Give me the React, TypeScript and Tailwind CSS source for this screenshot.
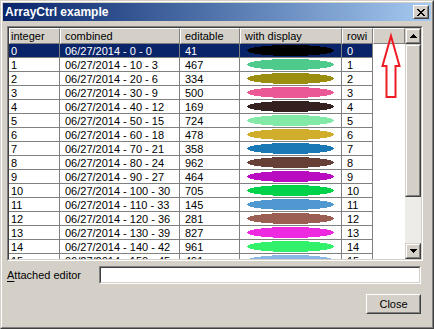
import React from "react";

const colors = [
  "#000000", "#4ecb8c", "#9b8d0e", "#ea5896", "#33201f", "#82eaa6", "#d1ad2c", "#1a78b4",
  "#663f36", "#b90bbf", "#00d24a", "#5098d0", "#9b5e52", "#ee2ae0", "#31f06a", "#8ab6e6",
];
const editable = [41, 467, 334, 500, 169, 724, 478, 358, 962, 464, 705, 145, 281, 827, 961, 491];

const raised =
  "border-t border-l border-t-white border-l-white border-r border-b border-r-[#808080] border-b-[#808080]";

function ScrollBtn({ down }: { down?: boolean }) {
  return (
    <div className="w-[16px] h-[16px] border border-t-[#d4d0c8] border-l-[#d4d0c8] border-r-[#404040] border-b-[#404040] bg-[#d4d0c8] shrink-0">
      <div className="w-full h-full border border-t-white border-l-white border-r-[#808080] border-b-[#808080] flex items-center justify-center">
        <svg width="7" height="4" viewBox="0 0 7 4" shapeRendering="crispEdges">
          {down ? (
            <polygon points="0,0 7,0 3.5,4" fill="#000" />
          ) : (
            <polygon points="3.5,0 7,4 0,4" fill="#000" />
          )}
        </svg>
      </div>
    </div>
  );
}

export default function App() {
  const font = "font-['Liberation_Sans',Arial,sans-serif]";
  return (
    <div className={`w-[434px] h-[329px] ${font} text-[11px] text-black`}>
      <div className="w-full h-full border border-t-[#d4d0c8] border-l-[#d4d0c8] border-r-[#404040] border-b-[#404040] bg-[#d4d0c8]">
        <div className="w-full h-full border border-t-white border-l-white border-r-[#808080] border-b-[#808080] p-px flex flex-col">
          {/* Title bar */}
          <div className="h-[18px] shrink-0 flex items-center justify-between bg-gradient-to-r from-[#0a246a] to-[#a6caf0] pl-[2px] pr-[2px]">
            <span className="text-white font-bold text-[12px] leading-[18px]">ArrayCtrl example</span>
            <div className="w-[16px] h-[14px] border border-t-white border-l-white border-r-[#404040] border-b-[#404040] bg-[#d4d0c8]">
              <div className="w-full h-full border border-t-[#d4d0c8] border-l-[#d4d0c8] border-r-[#808080] border-b-[#808080] flex items-center justify-center">
                <svg width="8" height="7" viewBox="0 0 8 7" shapeRendering="crispEdges">
                  <path d="M0 0h2l2 2.5L6 0h2L5 3.5 8 7H6L4 4.5 2 7H0l3-3.5z" fill="#000" />
                </svg>
              </div>
            </div>
          </div>

          {/* Body */}
          <div className="flex-1 flex flex-col pl-[4px] pr-[8px] pt-[5px]">
            {/* Grid */}
            <div className="relative w-[416px] h-[235px] shrink-0 border border-t-[#808080] border-l-[#808080] border-r-white border-b-white">
              <div className="w-full h-full border border-t-[#404040] border-l-[#404040] border-r-[#d4d0c8] border-b-[#d4d0c8] flex bg-white">
                <div className="w-[396px] h-full overflow-hidden flex flex-col">
                  {/* Header */}
                  <div className="flex h-[16px] shrink-0 bg-[#d4d0c8] leading-[14px]">
                    <div className={`w-[51px] ${raised} pl-[1px]`}>integer</div>
                    <div className={`w-[120px] ${raised} pl-[4px]`}>combined</div>
                    <div className={`w-[60px] ${raised} pl-[4px]`}>editable</div>
                    <div className={`w-[102px] ${raised} pl-[4px]`}>with display</div>
                    <div className={`w-[31px] ${raised} pl-[4px] overflow-hidden whitespace-nowrap`}>rowi</div>
                    <div className={`w-[32px] ${raised}`}></div>
                  </div>
                  {/* Rows */}
                  {colors.map((c, i) => {
                    const sel = i === 0;
                    const cell = `h-[14px] border-r border-b border-[#808080] leading-[14px] whitespace-nowrap overflow-hidden ${
                      sel ? "bg-[#0a246a] text-white" : "bg-white"
                    }`;
                    return (
                      <div key={i} className="flex shrink-0 h-[14px]">
                        <div className={`w-[51px] pl-[2px] ${cell}`}>{i}</div>
                        <div className={`w-[120px] pl-[5px] ${cell}`}>{`06/27/2014 - ${i * 10} - ${i * 3}`}</div>
                        <div className={`w-[60px] pl-[5px] ${cell}`}>{editable[i]}</div>
                        <div className={`w-[102px] flex items-center justify-center ${cell}`}>
                          <svg width="87" height="11" viewBox="0 0 87 11" shapeRendering="crispEdges">
                            <ellipse cx="43.5" cy="5.5" rx="43.5" ry="5.5" fill={c} />
                          </svg>
                        </div>
                        <div className={`w-[31px] pl-[5px] ${cell}`}>{i}</div>
                        <div className="w-[32px] h-[14px] bg-white"></div>
                      </div>
                    );
                  })}
                </div>
                {/* Scrollbar */}
                <div className="w-[16px] h-full flex flex-col bg-[#edece8]">
                  <ScrollBtn />
                  <div className="w-[16px] h-[153px] shrink-0 border border-t-[#d4d0c8] border-l-[#d4d0c8] border-r-[#404040] border-b-[#404040] bg-[#d4d0c8]">
                    <div className="w-full h-full border border-t-white border-l-white border-r-[#808080] border-b-[#808080]"></div>
                  </div>
                  <div className="flex-1"></div>
                  <ScrollBtn down />
                </div>
              </div>
              {/* Red annotation arrow */}
              <svg
                className="absolute left-[371px] top-[5px] pointer-events-none"
                width="24"
                height="68"
                viewBox="0 0 24 68"
              >
                <polygon
                  points="12,4 20.5,34 16.5,34 16.5,65 7.5,65 7.5,34 3.5,34"
                  fill="none"
                  stroke="#ee1c24"
                  strokeWidth="2"
                  strokeLinejoin="miter"
                />
              </svg>
            </div>

            {/* Attached editor */}
            <div className="flex items-center mt-[5px] h-[18px] shrink-0">
              <div className="w-[92px] leading-[18px]">
                <span className="underline underline-offset-[2px]">A</span>ttached editor
              </div>
              <div className="w-[322px] h-[18px] border border-t-[#808080] border-l-[#808080] border-r-white border-b-white">
                <div className="w-full h-full border border-t-[#404040] border-l-[#404040] border-r-[#d4d0c8] border-b-[#d4d0c8] bg-white"></div>
              </div>
            </div>

            {/* Close button */}
            <div className="flex justify-end mt-[10px] pr-[2px]">
              <div className="w-[55px] h-[20px] border border-t-white border-l-white border-r-[#404040] border-b-[#404040] bg-[#d4d0c8]">
                <div className="w-full h-full border border-t-[#d4d0c8] border-l-[#d4d0c8] border-r-[#808080] border-b-[#808080] flex items-center justify-center leading-none">
                  Close
                </div>
              </div>
            </div>
          </div>
        </div>
      </div>
    </div>
  );
}
